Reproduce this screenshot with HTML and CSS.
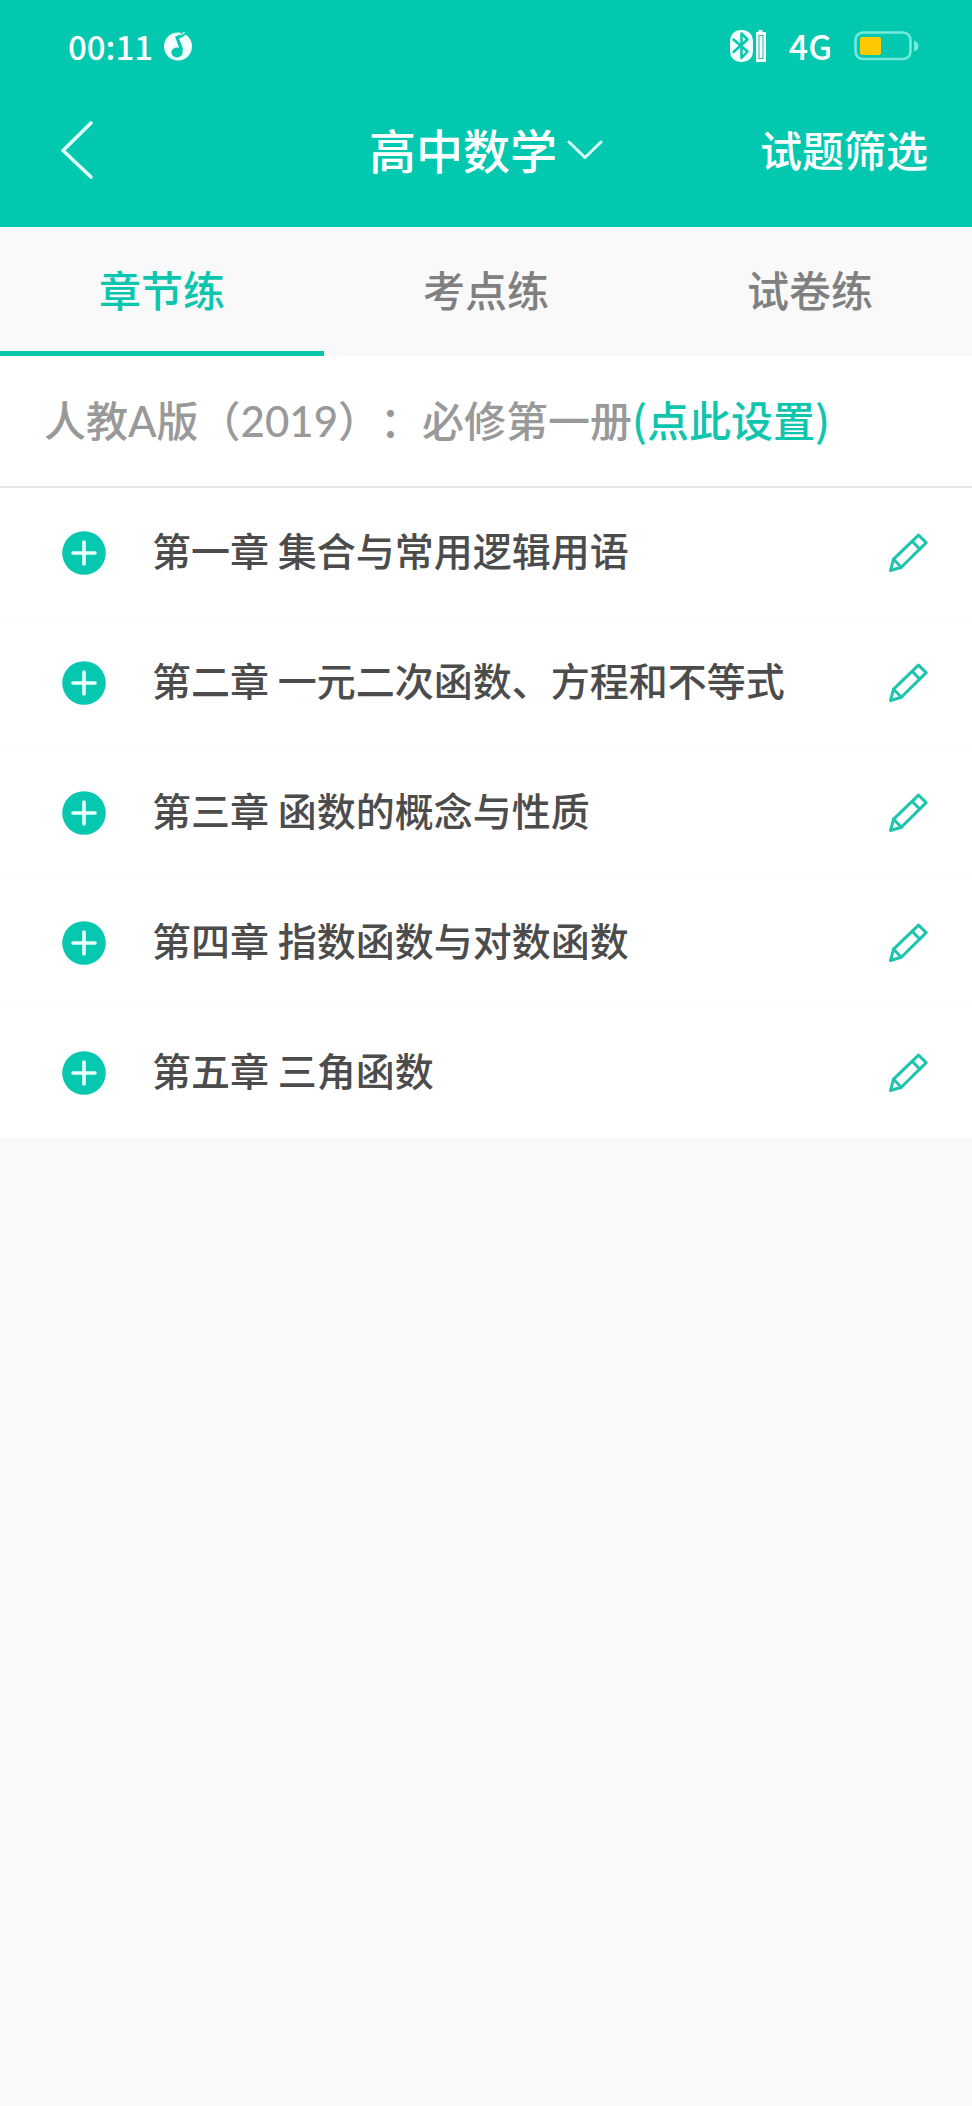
FILE: index.html
```html
<!DOCTYPE html>
<html lang="zh-CN">
<head>
<meta charset="utf-8">
<meta name="viewport" content="width=device-width, initial-scale=1">
<title>高中数学</title>
<link rel="stylesheet" href="styles.css">
</head>
<body>
<svg class="defs" aria-hidden="true">
  <symbol id="plus" viewBox="0 0 44 44">
    <circle cx="22" cy="22" r="21.8" fill="#06c8b0"/>
    <path d="M22 11v22M11 22h22" stroke="#e9fffc" stroke-width="3.600" fill="none" stroke-linecap="round"/>
  </symbol>
  <symbol id="pencil" viewBox="0 0 40 40">
    <g fill="none" stroke="#1dc4ae" stroke-width="3" stroke-linejoin="round" stroke-linecap="round">
      <path d="M2.500 37.500L5.600 26.200L30.500 2.200L38.200 9.600L13.300 34.200Z"/>
      <path d="M5.600 26.200L13.300 34.200M24.200 8.400L31.800 16"/>
    </g>
  </symbol>
</svg>

<header class="header">
  <div class="status">
    <div class="status-left">
      <span>00:11</span>
      <svg class="music" viewBox="0 0 30 30" aria-hidden="true">
        <circle cx="15" cy="15.500" r="14" fill="#f2fffd"/>
        <g fill="#06c8b0">
          <ellipse cx="14" cy="21.500" rx="5.600" ry="5"/>
          <path d="M12 5.500Q16 5 20 0L22.500 3.500Q20 6.500 16 7.500L20 17.500L19 22L16.500 18Z"/>
        </g>
        <path d="M17 4Q20 3.500 21.500 1" stroke="#f2fffd" stroke-width="1.200" fill="none"/>
      </svg>
    </div>
    <div class="status-right">
      <svg class="bluetooth" viewBox="0 0 38 34" aria-hidden="true">
        <rect x="1" y="1" width="23" height="32" rx="10.500" fill="#f2fffd"/>
        <path d="M4.500 10.500L18.500 22.500L12.500 29V4.500L18.500 10.500L4.500 23" fill="none" stroke="#06c8b0" stroke-width="2.500" stroke-linejoin="round" stroke-linecap="round"/>
        <path d="M29.500 1h4v2h3.500v30H27V3h2.500z" fill="#f2fffd"/>
        <rect x="30" y="6.500" width="4" height="23" fill="none" stroke="#36b3a3" stroke-width="1"/>
      </svg>
      <span class="network">4G</span>
      <svg class="battery" viewBox="0 0 66 30" aria-hidden="true">
        <rect x="1.500" y="1.500" width="55" height="26.500" rx="7.500" fill="none" stroke="#74eadb" stroke-width="2.600"/>
        <path d="M60 9.500Q64.500 11 64.500 15T60 20.500Z" fill="#74eadb"/>
        <rect x="6" y="6" width="21" height="18" rx="2" fill="#fec901"/>
      </svg>
    </div>
  </div>
  <nav class="nav">
    <button class="back" type="button" aria-label="返回">
      <svg class="back-icon" viewBox="0 0 34 60" aria-hidden="true">
        <path d="M31 3L3 30.500L31 57" fill="none" stroke="#e4fffb" stroke-width="3.600" stroke-linecap="round" stroke-linejoin="round"/>
      </svg>
    </button>
    <button class="subject" type="button">
      <span>高中数学</span>
      <svg class="subject-arrow" viewBox="0 0 36 20" aria-hidden="true">
        <path d="M2 2L18 17.500L34 2" fill="none" stroke="#d8fff9" stroke-width="3" stroke-linecap="round" stroke-linejoin="round"/>
      </svg>
    </button>
    <button class="filter" type="button">试题筛选</button>
  </nav>
</header>

<div class="tabs" role="tablist">
  <button class="tab tab-active" type="button" role="tab" aria-selected="true">章节练</button>
  <button class="tab" type="button" role="tab" aria-selected="false">考点练</button>
  <button class="tab" type="button" role="tab" aria-selected="false">试卷练</button>
</div>

<main class="content">
  <p class="book">人教A版（2019）：必修第一册<a class="book-link" href="#">(点此设置)</a></p>
  <ul class="chapters">
    <li class="chapter">
      <button class="icon-button" type="button" aria-label="展开第一章"><svg class="plus"><use href="#plus"/></svg></button>
      <span class="chapter-name">第一章 集合与常用逻辑用语</span>
      <button class="icon-button" type="button" aria-label="练习第一章"><svg class="pencil"><use href="#pencil"/></svg></button>
    </li>
    <li class="chapter">
      <button class="icon-button" type="button" aria-label="展开第二章"><svg class="plus"><use href="#plus"/></svg></button>
      <span class="chapter-name">第二章 一元二次函数、方程和不等式</span>
      <button class="icon-button" type="button" aria-label="练习第二章"><svg class="pencil"><use href="#pencil"/></svg></button>
    </li>
    <li class="chapter">
      <button class="icon-button" type="button" aria-label="展开第三章"><svg class="plus"><use href="#plus"/></svg></button>
      <span class="chapter-name">第三章 函数的概念与性质</span>
      <button class="icon-button" type="button" aria-label="练习第三章"><svg class="pencil"><use href="#pencil"/></svg></button>
    </li>
    <li class="chapter">
      <button class="icon-button" type="button" aria-label="展开第四章"><svg class="plus"><use href="#plus"/></svg></button>
      <span class="chapter-name">第四章 指数函数与对数函数</span>
      <button class="icon-button" type="button" aria-label="练习第四章"><svg class="pencil"><use href="#pencil"/></svg></button>
    </li>
    <li class="chapter">
      <button class="icon-button" type="button" aria-label="展开第五章"><svg class="plus"><use href="#plus"/></svg></button>
      <span class="chapter-name">第五章 三角函数</span>
      <button class="icon-button" type="button" aria-label="练习第五章"><svg class="pencil"><use href="#pencil"/></svg></button>
    </li>
  </ul>
</main>
</body>
</html>
```
FILE: styles.css
```css
* {
  box-sizing: border-box;
}

body {
  margin: 0;
  min-height: 100vh;
  background: #f9f9f9;
  font-family: "Noto Sans CJK SC", sans-serif;
  font-weight: 500;
  color: #4c4c4c;
}

button {
  margin: 0;
  padding: 0;
  border: 0;
  background: none;
  font: inherit;
  color: inherit;
  cursor: pointer;
}

svg {
  display: block;
  flex: none;
}

.defs {
  position: absolute;
  width: 0;
  height: 0;
}

.header {
  background: #02c8b0;
  color: #fff;
}

.status {
  display: flex;
  justify-content: space-between;
  padding: 18px 52px 0 68px;
  font-size: 33px;
  line-height: 56px;
}

.status-left,
.status-right {
  display: flex;
  align-items: center;
}

.status-left {
  gap: 10px;
}

.status-right {
  gap: 22px;
}

.music {
  width: 30px;
  height: 30px;
}

.bluetooth {
  width: 38px;
  height: 34px;
}

.network {
  font-size: 34px;
}

.battery {
  width: 66px;
  height: 30px;
}

.nav {
  display: grid;
  grid-template-columns: 1fr auto 1fr;
  align-items: center;
  padding: 0 44px 2px;
  height: 153px;
}

.back {
  justify-self: start;
  padding-left: 16px;
}

.back-icon {
  width: 34px;
  height: 60px;
}

.subject {
  display: flex;
  align-items: center;
  gap: 10px;
  font-size: 47px;
  line-height: 70px;
}

.subject span,
.filter {
  padding-bottom: 2px;
}

.subject-arrow {
  width: 36px;
  height: 20px;
}

.filter {
  justify-self: end;
  font-size: 42px;
  line-height: 62px;
}

.tabs {
  display: grid;
  grid-template-columns: repeat(3, 1fr);
}

.tab {
  padding: 31px 0;
  border-bottom: 5px solid transparent;
  font-size: 42px;
  line-height: 62px;
  color: #808080;
}

.tab-active {
  border-color: #0bc6af;
  color: #0bc6af;
}

.content {
  background: #fff;
}

.book {
  margin: 0;
  padding: 32px 44px 34px;
  border-bottom: 2px solid #e5e5e5;
  font-family: Lato, "Noto Sans CJK SC", sans-serif;
  font-size: 42px;
  line-height: 62px;
  color: #999;
  text-spacing-trim: space-all;
}

.book-link {
  color: #0fc5ae;
  font-family: "Noto Sans CJK SC", sans-serif;
  text-decoration: none;
}

.chapters {
  margin: 0;
  padding: 0;
  list-style: none;
}

.chapter {
  display: flex;
  align-items: center;
  padding: 32px 44px 31px 62px;
  border-bottom: 1px solid #fafafa;
}

.plus {
  width: 44px;
  height: 44px;
}

.chapter-name {
  flex: 1;
  padding: 0 24px 8px 46px;
  font-size: 39px;
  line-height: 58px;
}

.pencil {
  width: 40px;
  height: 40px;
}
```
